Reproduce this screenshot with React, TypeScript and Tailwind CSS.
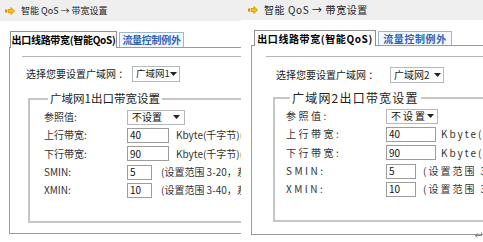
import React from "react";

function cn(...c: Array<string | false | null | undefined>) {
  return c.filter(Boolean).join(" ");
}

function NavIcon() {
  return (
    <svg width="10" height="8" viewBox="0 0 10 8" className="shrink-0">
      <rect x="0" y="2.5" width="2" height="3" fill="#e08a00" />
      <path d="M3 2.5h3V0.5L9.5 4 6 7.5V5.5H3z" fill="#f7c600" stroke="#d88a00" strokeWidth="0.8" />
    </svg>
  );
}

function Caret() {
  return (
    <svg width="7" height="4" viewBox="0 0 7 4" className="shrink-0">
      <path d="M0 0h7L3.5 4z" fill="#222" />
    </svg>
  );
}

// little return mark in the bottom corner of the second shot
function ReturnMark() {
  return (
    <svg width="8" height="7" viewBox="0 0 8 7">
      <path d="M7.5 0.5V3.5H1.5M3.5 1.5L1.2 3.5 3.5 5.5" fill="none" stroke="#777" strokeWidth="0.9" />
    </svg>
  );
}

type Cfg = {
  panel: string;
  header: string;
  headText: string;
  tabsWrap: string;
  tabA: string;
  tabB: string;
  tabText: string;
  box: string;
  rule: string;
  pickRow: string;
  pickText: string;
  pickSel: string;
  fs: string;
  legend: string;
  label: string;
  sel: string;
  selText: string;
  inputW: string;
  smallW: string;
  after: string;
  afterGap: string;
  afterGap2: string;
  wan: string;
};

const left: Cfg = {
  panel: "w-[241px]",
  header: "h-[21px] pl-[5px]",
  headText: "ml-[6px] text-[9px]",
  tabsWrap: "mt-[10px] ml-[9px]",
  tabA: "ml-[1px] w-[107px] h-[17px]",
  tabB: "w-[65px] h-[15px]",
  tabText: "text-[10px] tracking-[-0.3px]",
  box: "h-[187px]",
  rule: "mt-[8px] ml-[12px]",
  pickRow: "mt-[8px] ml-[16px]",
  pickText: "w-[106px]",
  pickSel: "w-[48px] text-[9.5px]",
  fs: "mt-[7px] ml-[18px] h-[133px] pl-[14px]",
  legend: "text-[11.5px]",
  label: "w-[83px]",
  sel: "w-[58px]",
  selText: "",
  inputW: "w-[42px]",
  smallW: "w-[25px]",
  after: "",
  afterGap: "ml-[7px]",
  afterGap2: "ml-[9px]",
  wan: "1",
};

const right: Cfg = {
  panel: "w-[242px]",
  header: "h-[20px] pl-[7px]",
  headText: "ml-[6px] text-[10px] tracking-[0.6px]",
  tabsWrap: "mt-[10px] ml-[10px]",
  tabA: "ml-[3px] w-[122px] h-[16px]",
  tabB: "w-[74px] h-[14px]",
  tabText: "text-[10px] tracking-[0.6px]",
  box: "h-[190px]",
  rule: "mt-[10px] ml-[14px]",
  pickRow: "mt-[9px] ml-[24px]",
  pickText: "w-[114px]",
  pickSel: "w-[54px] text-[10px]",
  fs: "mt-[5px] ml-[21px] h-[133px] pl-[11px]",
  legend: "text-[12px] tracking-[1.2px]",
  label: "w-[100px] tracking-[2.5px]",
  sel: "w-[52px]",
  selText: "tracking-[2px]",
  inputW: "w-[50px]",
  smallW: "w-[30px]",
  after: "tracking-[2px]",
  afterGap: "ml-[5px]",
  afterGap2: "ml-[7px]",
  wan: "2",
};

function Box({ w, children, className }: { w: string; children: React.ReactNode; className?: string }) {
  return (
    <div
      className={cn(
        "h-[15px] shrink-0 border border-[#9c9c9c] bg-white pl-[2px] flex items-center text-[10px] leading-none text-[#111]",
        w,
        className
      )}
    >
      {children}
    </div>
  );
}

function Panel({ c, mark }: { c: Cfg; mark?: boolean }) {
  const rows = [
    { label: "参照值:", sel: "不设置" },
    { label: "上行带宽:", value: "40", w: c.inputW, after: "Kbyte(千字节)(1-", gap: c.afterGap },
    { label: "下行带宽:", value: "90", w: c.inputW, after: "Kbyte(千字节)(1-", gap: c.afterGap },
    { label: "SMIN:", value: "5", w: c.smallW, after: "(设置范围 3-20，系统", gap: c.afterGap2 },
    { label: "XMIN:", value: "10", w: c.smallW, after: "(设置范围 3-40，系统", gap: c.afterGap2 },
  ];
  return (
    <div className={cn("relative h-full shrink-0 overflow-hidden bg-white", c.panel)}>
      <div className={cn("flex items-center bg-[#efefef]", c.header)}>
        <NavIcon />
        <span className={cn("whitespace-nowrap leading-none text-[#222]", c.headText)}>智能 QoS → 带宽设置</span>
      </div>

      <div className={cn("w-[320px]", c.tabsWrap)}>
        <div className="flex items-end">
          <div
            className={cn(
              "relative z-10 -mb-px flex items-center justify-center whitespace-nowrap border border-b-0 border-[#8f8f8f] bg-white font-bold leading-none text-black",
              c.tabA,
              c.tabText
            )}
          >
            出口线路带宽(智能QoS)
          </div>
          <div
            className={cn(
              "ml-[2px] flex items-center justify-center whitespace-nowrap border border-b-0 border-[#9fb6cf] bg-[#f5f8fb] font-bold leading-none text-[#2b62b5]",
              c.tabB,
              c.tabText
            )}
          >
            流量控制例外
          </div>
        </div>

        <div className={cn("border border-[#9a9a9a] bg-white", c.box)}>
          <div className={cn("h-px bg-[#b4b4b4]", c.rule)} />

          <div className={cn("flex h-[18px] items-center text-[10px] leading-none text-[#222]", c.pickRow)}>
            <span className={cn("shrink-0 whitespace-nowrap", c.pickText)}>选择您要设置广域网 ：</span>
            <div
              className={cn(
                "flex h-[16px] shrink-0 items-center justify-between whitespace-nowrap border border-[#b5b9bf] bg-white pl-[3px] pr-[2px]",
                c.pickSel
              )}
            >
              <span>广域网{c.wan}</span>
              <Caret />
            </div>
          </div>

          <fieldset className={cn("border-2 border-[#c6c6c6] text-[#333]", c.fs)}>
            <legend className={cn("ml-[4px] whitespace-nowrap px-[2px] leading-[17px] text-[#222]", c.legend)}>
              广域网{c.wan}出口带宽设置
            </legend>
            <div className="flex flex-col pt-px">
              {rows.map((r) => (
                <div key={r.label} className="flex h-[18.3px] items-center whitespace-nowrap text-[10px] leading-none">
                  <span className={cn("shrink-0", c.label)}>{r.label}</span>
                  {r.sel ? (
                    <Box w={c.sel} className="justify-between border-[#b5b9bf] pl-[4px] pr-[4px]">
                      <span className={c.selText}>{r.sel}</span>
                      <Caret />
                    </Box>
                  ) : (
                    <>
                      <Box w={r.w!}>{r.value}</Box>
                      <span className={cn("shrink-0 text-[#333]", r.gap, c.after)}>{r.after}</span>
                    </>
                  )}
                </div>
              ))}
            </div>
          </fieldset>
        </div>
      </div>

      {mark && (
        <span className="absolute bottom-[3px] right-[1px] flex">
          <ReturnMark />
        </span>
      )}
    </div>
  );
}

export default function App() {
  return (
    <div className="flex h-[242px] w-[483px] overflow-hidden bg-white font-['Noto_Sans_CJK_SC',sans-serif]">
      <Panel c={left} />
      <Panel c={right} mark />
    </div>
  );
}
